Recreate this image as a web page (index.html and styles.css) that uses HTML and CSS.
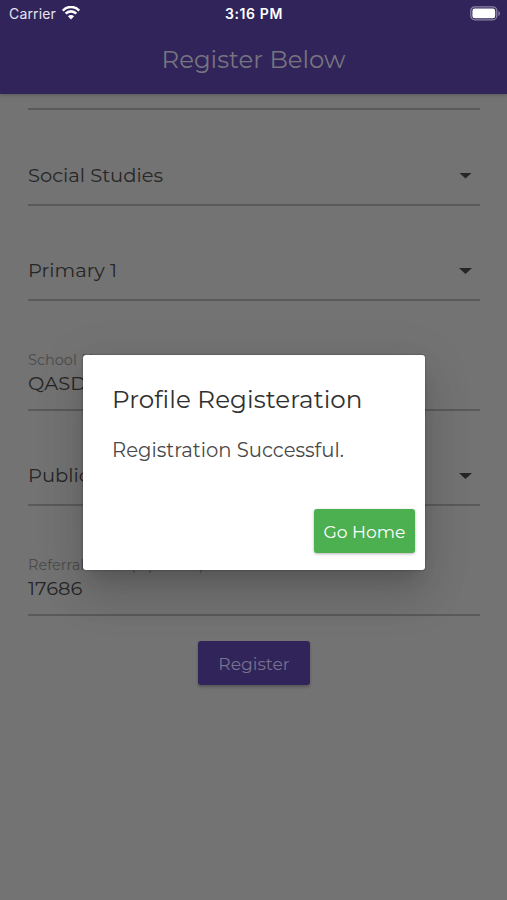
FILE: index.html
```html
<!DOCTYPE html>
<html lang="en">
<head>
<meta charset="utf-8">
<title>Register Below</title>
<link rel="stylesheet" href="styles.css">
</head>
<body>
<div class="screen">
  <header class="header">
    <div class="status">
      <div class="carrier"><span class="carrier-name">Carrier</span>
        <svg class="wifi" viewBox="0 0 18 14"><path d="M.8 4.7C5.2-.2 12.8-.2 17.2 4.7" /><path d="M3.7 7.7c2.9-3.1 7.7-3.1 10.6 0"/><path class="dot" d="M5.9 10.3c1.7-1.7 4.5-1.7 6.2 0L9 13.6z"/></svg>
      </div>
      <div class="clock">3:16 PM</div>
      <svg class="battery" viewBox="0 0 31 15"><rect class="shell" x=".8" y=".8" width="26" height="13" rx="4"/><rect class="charge" x="2.4" y="2.6" width="22.8" height="9.6" rx="2.3"/><path class="cap" d="M28.4 5c2 .5 2 4.500 0 5z"/></svg>
    </div>
    <h1 class="title"><span>Register Below</span></h1>
  </header>
  <main class="form">
    <div class="field stub"></div>
    <div class="field select"><span class="value">Social Studies</span><i class="arrow"></i></div>
    <div class="field select"><span class="value">Primary 1</span><i class="arrow"></i></div>
    <div class="field input"><label class="label">School Name</label><span class="value">QASDF</span></div>
    <div class="field select"><span class="value">Public</span><i class="arrow"></i></div>
    <div class="field input"><label class="label">Referral Code (Optional)</label><span class="value">17686</span></div>
    <button class="register"><span>Register</span></button>
  </main>
  <section class="dialog" role="dialog">
    <h2 class="dialog-title"><span>Profile Registeration</span></h2>
    <p class="message"><span>Registration Successful.</span></p>
    <button class="home"><span>Go Home</span></button>
  </section>
</div>
</body>
</html>
```
FILE: styles.css
```css
* { box-sizing: border-box; margin: 0; }
body { background: #737373; font-family: Montserrat, Inter, sans-serif; }
.screen { position: relative; width: 507px; height: 900px; overflow: hidden; background: #737373; }
.header { height: 94px; background: #30245b; box-shadow: 0 1px 4px rgba(0,0,0,.25); }
.status { display: grid; grid-template-columns: 1fr auto 1fr; height: 27px; align-items: center; padding: 0 6px 0 9px; color: #fff; font-family: Inter, sans-serif; }
.carrier { display: flex; align-items: center; gap: 6px; color: #e6e4ed; font-size: 14px; }
.carrier-name { letter-spacing: .15px; }
.wifi { width: 18px; height: 14px; margin-top: -1px; fill: none; stroke: #fff; stroke-width: 2.6; }
.wifi .dot { fill: #fff; stroke: none; }
.clock { position: relative; left: -1px; font-size: 14px; font-weight: 600; letter-spacing: .6px; }
.battery { width: 31px; height: 15px; justify-self: end; }
.shell { fill: none; stroke: #8a83a5; stroke-width: 1.3; }
.charge { fill: #fff; }
.cap { fill: #8a83a5; }
.title { height: 66px; line-height: 64px; text-align: center; font-size: 24.400px; font-weight: 400; color: #77747f; }
.form { display: flex; flex-direction: column; padding: 0 27px 0 28px; }
.field { border-bottom: 2px solid #5a5a5a; color: #262626; }
.stub { height: 16px; }
.select { display: flex; align-items: center; justify-content: space-between; height: 96px; padding: 35px 8px 0 0; }
.select + .select { height: 95px; }
.value { display: block; font-size: 19.500px; line-height: 24px; white-space: nowrap; }
.arrow { width: 13px; height: 6px; margin-top: 2px; background: #262626; clip-path: polygon(0 0, 100% 0, 50% 100%); }
.input { height: 110px; padding-top: 49px; }
.input + .select { height: 95px; }
.label { display: block; height: 21px; line-height: 20px; font-size: 14.500px; color: #4b4b4b; word-spacing: .8px; }
.register { align-self: center; width: 112px; height: 44px; margin-top: 25px; padding: 0; border: 0; border-radius: 3px; background: #30245b; color: #77728c; font: 400 17.200px/46px Montserrat, Inter, sans-serif; box-shadow: 0 2px 3px rgba(0,0,0,.25); }
.register span, .home span { display: block; height: 44px; }
.dialog { position: absolute; left: 83px; top: 355px; width: 342px; height: 215px; padding: 29px 10px 17px 29px; border-radius: 3px; background: #fff; display: flex; flex-direction: column; box-shadow: 0 13px 18px -8px rgba(0,0,0,.16), 0 27px 43px 3px rgba(0,0,0,.11), 0 10px 52px 9px rgba(0,0,0,.05), 0 0 2px rgba(0,0,0,.4); }
.dialog-title { height: 31px; line-height: 31px; font-size: 24.600px; font-weight: 400; color: #303030; letter-spacing: .05px; }
.message { height: 25px; margin-top: 22px; line-height: 26px; font-size: 19.600px; color: #484848; }
.home { align-self: flex-end; width: 101px; height: 44px; margin-top: auto; padding: 0; border: 0; border-radius: 3px; background: #4caf50; color: #fff; font: 400 17.200px/46px Montserrat, Inter, sans-serif; box-shadow: 0 1px 3px rgba(0,0,0,.3); }
```
